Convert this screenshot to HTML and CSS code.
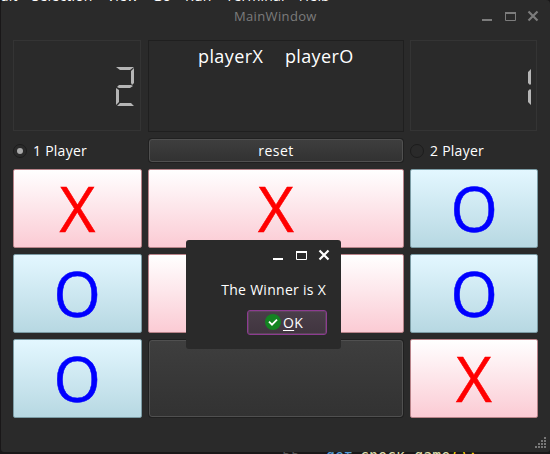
FILE: index.html
```
<!DOCTYPE html>
<html lang="en">
<head>
<meta charset="utf-8">
<title>MainWindow</title>
<link rel="stylesheet" href="styles.css">
</head>
<body>
<div class="menu-strip"><span>Edit</span><span>Selection</span><span>View</span><span>Go</span><span>Run</span><span>Terminal</span><span>Help</span></div>
<div class="code-strip"><span class="num">55</span><span class="kw">get</span><span class="fn">check_game</span><span class="par">();</span></div>
<main class="window">
  <header class="titlebar">
    <h1>MainWindow</h1>
    <svg class="controls" width="60" height="14" viewBox="0 0 60 14"><path class="fill" d="M1 9h10v2H1z"/><path class="line" d="M24.5 2.5h10v8h-10z"/><path class="fill" d="M24 2h11v2H24z"/><path class="cross" d="M47.5 1.5l9 9m0-9l-9 9"/></svg>
  </header>
  <section class="board">
    <div class="lcd">
      <svg width="18" height="40" viewBox="0 0 18 40"><path d="M0 0h18l-4 3H4zM18 1v15l-2 2-1-2V4zM3 18h12l2 1-3 2H3l-2-1zM0 21l3 2v12l-3 3zM4 36h11l3 3H1z"/></svg>
    </div>
    <div class="names"><span class="px">playerX</span><span class="po">playerO</span></div>
    <div class="lcd lcd-clipped">
      <svg width="3" height="36" viewBox="0 0 3 36"><path d="M3 0v15l-1 1-2-2V3zM3 21v15l-3-3V22l2-2z"/></svg>
    </div>
    <label class="radio"><i class="dot on"></i><span>1 Player</span></label>
    <button class="reset"><span>reset</span></button>
    <label class="radio"><i class="dot"></i><span>2 Player</span></label>
    <button class="cell x"><span>X</span></button>
    <button class="cell x"><span>X</span></button>
    <button class="cell o"><span>O</span></button>
    <button class="cell o"><span>O</span></button>
    <button class="cell x"></button>
    <button class="cell o"><span>O</span></button>
    <button class="cell o"><span>O</span></button>
    <button class="cell empty"></button>
    <button class="cell x"><span>X</span></button>
  </section>
  <svg class="grip" width="11" height="11" viewBox="0 0 11 11"><path d="M9 0h2v2H9zM6 3h2v2H6zM9 3h2v2H9zM3 6h2v2H3zM6 6h2v2H6zM9 6h2v2H9zM0 9h2v2H0zM3 9h2v2H3zM6 9h2v2H6zM9 9h2v2H9z"/></svg>
</main>
<div class="dialog" role="dialog">
  <svg class="controls" width="60" height="14" viewBox="0 0 60 14"><path class="fill" d="M1 9h10v2H1z"/><path class="line" d="M24.5 2.5h10v8h-10z"/><path class="fill" d="M24 2h11v2H24z"/><path class="cross" d="M47.5 1.5l9 9m0-9l-9 9"/></svg>
  <p>The Winner is X</p>
  <button class="ok"><svg width="16" height="16" viewBox="0 0 16 16"><circle cx="8" cy="8" r="8"/><path d="M4 7.7l3 3 5-5"/></svg><span><u>O</u>K</span></button>
</div>
</body>
</html>
```
FILE: styles.css
```
* { box-sizing: border-box; }
body {
  margin: 0;
  width: 550px;
  height: 454px;
  overflow: hidden;
  position: relative;
  background: #191718;
  color: #fff;
  font: 14px/20px "Open Sans", "Noto Sans", sans-serif;
}
button { font: inherit; color: inherit; padding: 0; margin: 0; }
h1, p { margin: 0; font-weight: 400; }
.menu-strip {
  position: absolute;
  z-index: 2;
  left: -8px;
  top: 0;
  height: 1px;
  display: flex;
  gap: 14px;
  line-height: 20px;
  letter-spacing: .2px;
  overflow: hidden;
  white-space: nowrap;
}
.menu-strip span { margin-top: -14px; }
.code-strip {
  position: absolute;
  left: 282px;
  top: 452px;
  height: 2px;
  display: flex;
  overflow: hidden;
  font: 15px/16px "DejaVu Sans Mono", monospace;
}
.code-strip span { margin-top: -4px; }
.code-strip .num { color: #555; width: 44px; }
.code-strip .kw { color: #569cd6; width: 34px; }
.code-strip .fn { color: #dcdcaa; }
.code-strip .par { color: #ffd700; }
.window {
  position: relative;
  margin-left: 1px;
  height: 452px;
  background: #2a2a2a;
  border-radius: 4px 4px 3px 3px;
}
.titlebar {
  height: 40px;
  padding: 9px 9px 0 233px;
  display: flex;
  justify-content: space-between;
  color: #7c7c7c;
}
.titlebar h1 { font-size: 13px; line-height: 15px; letter-spacing: .35px; }
.titlebar .controls { margin-top: 1px; }
.controls { display: block; }
.controls .fill { fill: currentColor; }
.controls .line { fill: none; stroke: currentColor; }
.controls .cross { fill: none; stroke: currentColor; stroke-width: 2.2; }
.board {
  margin-left: 12px;
  width: 525px;
  display: grid;
  grid-template-columns: 129px 256px 128px;
  grid-template-rows: 92px 25px 79px 79px 79px;
  gap: 6px;
}
.lcd {
  height: 91px;
  width: 128px;
  border: 1px solid #343434;
  display: flex;
  justify-content: flex-end;
  padding: 26px 6px 0 0;
}
.lcd svg { fill: #b5b5b5; }
.lcd-clipped { width: 127px; padding: 28px 5px 0 0; }
.names {
  border: 1px solid #1f1f1f;
  display: flex;
  gap: 22px;
  padding: 3px 0 0 49px;
  font-size: 18px;
  line-height: 24px;
}
.names span { width: 65px; white-space: nowrap; letter-spacing: .4px; }
.names .po { width: 68px; letter-spacing: .35px; }
.radio { display: flex; align-items: center; gap: 6px; }
.radio span { letter-spacing: .25px; }
.dot {
  width: 14px;
  height: 14px;
  border: 1px solid #1c1c1c;
  border-radius: 50%;
  display: flex;
  align-items: center;
  justify-content: center;
}
.dot.on::before { content: ""; width: 6px; height: 6px; border-radius: 50%; background: #aaa; }
.reset, .empty {
  border: 1px solid #505050;
  border-radius: 3px;
  background: linear-gradient(#3e3e3e, #323232);
  box-shadow: 0 0 0 1px #202020;
}
.reset { margin: 1px 1px 1px; line-height: 21px; }
.reset span { letter-spacing: .45px; }
.cell {
  font-size: 62px;
  line-height: 79px;
  border-radius: 2px;
  display: flex;
  justify-content: center;
  overflow: hidden;
}
.cell span { line-height: 76px; -webkit-text-stroke: .5px currentColor; }
.cell.o span { transform: scaleX(.98); }
.x { color: #f00; background: linear-gradient(#fff, #fbcbd4); border: 1px solid #b88389; }
.o { color: #00f; background: linear-gradient(#e3f7ff, #b7d8e2); border: 1px solid #7b9ba4; }
.cell.empty { margin: 1px; border-radius: 3px; overflow: visible; border: 1px solid #505050; }
.grip { position: absolute; right: 4px; bottom: 4px; fill: #777; }
.dialog {
  position: absolute;
  z-index: 3;
  left: 186px;
  top: 240px;
  width: 155px;
  height: 109px;
  border-radius: 3px;
  background: #2a2a2a;
  padding: 9px 14px 0 0;
  display: flex;
  flex-direction: column;
  align-items: flex-end;
}
.dialog .controls { margin-right: -5px; }
.dialog p { margin: 17px 1px 0 0; letter-spacing: .28px; white-space: nowrap; }
.ok {
  width: 80px;
  height: 25px;
  margin-top: 10px;
  border: 1px solid #8d3b91;
  border-radius: 3px;
  background: linear-gradient(#4a3e49, #40353f);
  box-shadow: inset 0 0 0 1px #5b465a;
  display: flex;
  align-items: center;
  justify-content: center;
  gap: 2px;
  padding-right: 6px;
}
.ok svg { position: relative; top: -1px; }
.ok circle { fill: #138322; }
.ok path { fill: none; stroke: #fff; stroke-width: 1.8; }
.ok span { line-height: 20px; letter-spacing: .3px; }
.ok u { text-underline-offset: 2px; text-decoration-skip-ink: none; }
```
